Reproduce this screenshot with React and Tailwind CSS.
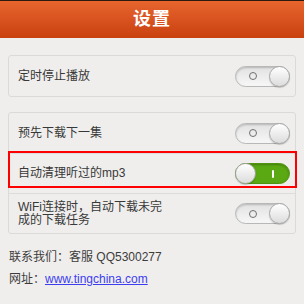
const FONT = { fontFamily: '"Liberation Sans", "Noto Sans CJK SC", sans-serif' }

const KNOB =
  'w-[21px] h-[21px] shrink-0 -my-px rounded-full bg-gradient-to-b from-[#ffffff] to-[#dcdcdc] border border-[#a9a9a9] shadow-[0_1px_1px_rgba(0,0,0,0.2)]'

function Toggle({ on = false }) {
  if (on) {
    return (
      <div className="flex items-center w-[55px] h-[21px] rounded-full bg-[#5aa812] border border-[#4f9410] shadow-[inset_0_1px_2px_rgba(0,0,0,0.25)]">
        <div className={KNOB + ' -ml-px'} />
        <div className="flex-1 flex justify-center">
          <div className="w-[2px] h-[8px] bg-white rounded-sm" />
        </div>
      </div>
    )
  }
  return (
    <div className="flex items-center w-[55px] h-[21px] rounded-full bg-gradient-to-b from-[#e2e2e2] to-[#f7f7f7] border border-[#b8b8b8] shadow-[inset_0_1px_2px_rgba(0,0,0,0.2)]">
      <div className="flex-1 flex justify-center">
        <div className="w-[8px] h-[8px] rounded-full border-[1.5px] border-[#707070]" />
      </div>
      <div className={KNOB + ' -mr-px'} />
    </div>
  )
}

function Row({ children, on, divider }) {
  return (
    <div className={'flex items-center justify-between h-[40px] pl-[9px] pr-[5px] ' + (divider ? 'border-t border-[#dcdcdc]' : '')}>
      <div className="text-[12px] leading-[13px] text-[#383838]">{children}</div>
      <Toggle on={on} />
    </div>
  )
}

export default function App() {
  return (
    <div className="w-[304px] h-[304px] bg-[#efeeec] overflow-hidden" style={FONT}>
      {/* header */}
      <div className="h-[38px] border-t border-[#2a1a10] bg-gradient-to-b from-[#e8652e] to-[#c8400c] flex items-center justify-center">
        <span className="text-white text-[18px] font-bold tracking-[1px]">设置</span>
      </div>

      <div className="px-[8px] pt-[17px]">
        <div className="border border-[#dadad8] rounded-[3px]">
          <Row>定时停止播放</Row>
        </div>

        <div className="relative mt-[15px] border border-[#dadad8] rounded-[3px]">
          <Row>预先下载下一集</Row>
          <Row on divider>自动清理听过的mp3</Row>
          <Row divider>
            WiFi连接时，自动下载未完
            <br />
            成的下载任务
          </Row>
          {/* red highlight annotation */}
          <div className="absolute left-[-1px] right-[-2px] top-[38px] h-[37px] border-2 border-[#ff0000]" />
        </div>

        <div className="pl-[1px] pt-[12px] text-[12px] text-[#3c3c3c] leading-[22px]">
          <div>联系我们：客服 QQ5300277</div>
          <div>
            网址：<span className="text-[#3d3df0] underline">www.tingchina.com</span>
          </div>
        </div>
      </div>
    </div>
  )
}
